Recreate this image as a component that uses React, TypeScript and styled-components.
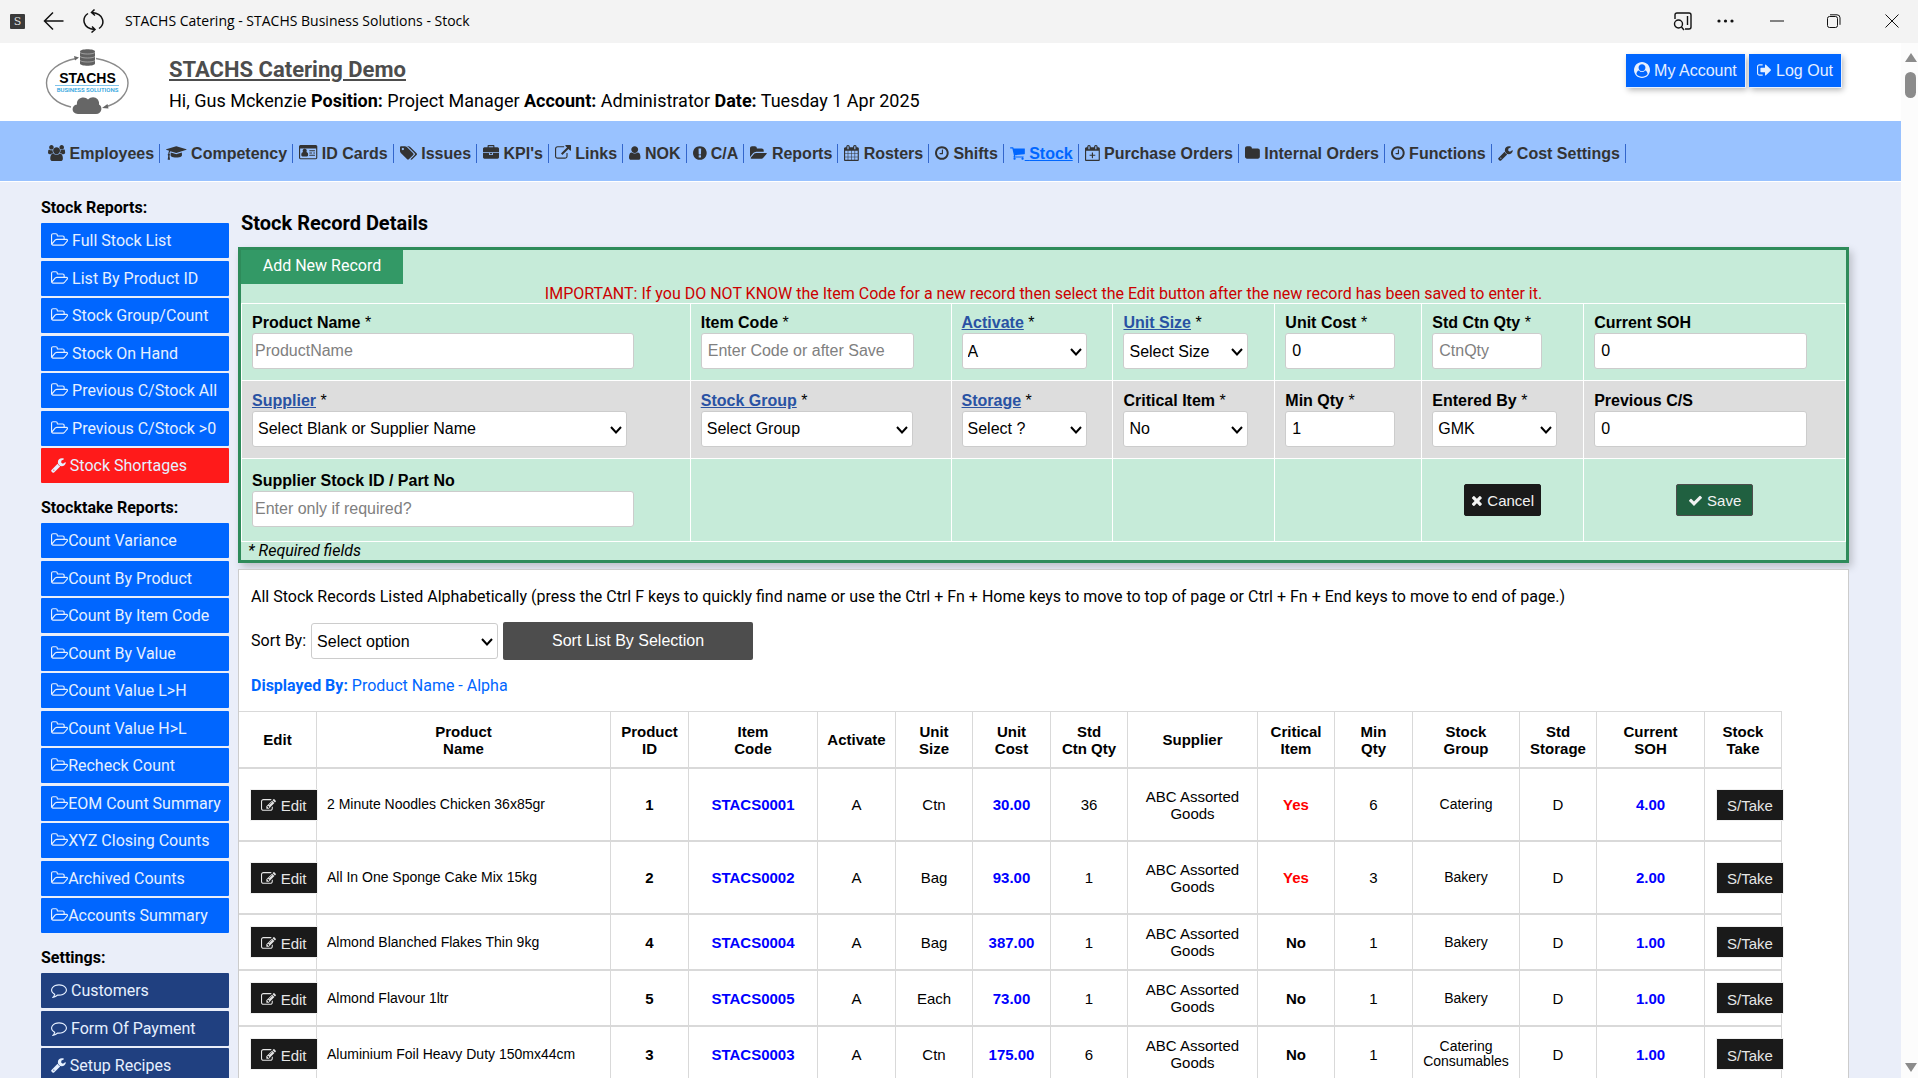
import React from "react";
import styled, { createGlobalStyle, css } from "styled-components";

const arial = `"Liberation Sans", Arial, sans-serif`;
const roboto = `Roboto, "Liberation Sans", sans-serif`;

const GlobalStyle = createGlobalStyle`
  *, *::before, *::after { box-sizing: border-box; }
  body { margin: 0; overflow: hidden; background: #eaeef9; color: #000; font: 16px/20px ${roboto}; }
  button, input, select { font-family: ${arial}; font-size: 16px; margin: 0; }
`;

/* ---------- icons ---------- */

type Glyph = { x: number; w: number; d: string };

const glyphs: Record<string, Glyph> = {
  users: { x: 0, w: 1920, d: "M593 896q-162 5-265 128h-134q-82 0-138-40.500t-56-118.500q0-353 124-353 6 0 43.500 21t97.500 42.500 119 21.500q67 0 133-23-5 37-5 66 0 159 81 290zm1071 637q0 120-73 189.500t-194 69.500h-874q-121 0-194-69.500t-73-189.500q0-53 3.500-103.500t14-109 26.500-108.500 43-97.500 62-81 85.500-53.500 111.500-20q10 0 43 21.500t73 48 107 48 135 21.500 135-21.500 107-48 73-48 43-21.500q61 0 111.500 20t85.500 53.500 62 81 43 97.500 26.500 108.500 14 109 3.500 103.500zm-1024-1277q0 106-75 181t-181 75-181-75-75-181 75-181 181-75 181 75 75 181zm704 384q0 159-112.500 271.500t-271.500 112.500-271.500-112.500-112.500-271.500 112.500-271.500 271.500-112.500 271.500 112.500 112.500 271.500zm576 225q0 78-56 118.500t-138 40.500h-134q-103-123-265-128 81-131 81-290 0-29-5-66 66 23 133 23 59 0 119-21.500t97.500-42.500 43.500-21q124 0 124 353zm-128-609q0 106-75 181t-181 75-181-75-75-181 75-181 181-75 181 75 75 181z" },
  cap: { x: 0, w: 2304, d: "M1774 836l18 316q4 69-82 128t-235 93.500-323 34.500-323-34.500-235-93.500-82-128l18-316 574 181q22 7 48 7t48-7zm530-324q0 23-22 31l-1120 352q-4 1-10 1t-10-1l-652-206q-43 34-71 111.500t-34 178.500q63 36 63 109 0 69-58 107l58 433q2 14-8 25-9 11-24 11h-192q-15 0-24-11-10-11-8-25l58-433q-58-38-58-107 0-73 65-111 11-207 98-330l-333-104q-22-8-22-31t22-31l1120-352q4-1 10-1t10 1l1120 352q22 8 22 31z" },
  idCard: { x: 0, w: 2048, d: "M1024 1131q0 64-37 107t-91 43h-512q-54 0-91-43t-37-107 9-118 30-104 61-82 95-33q80 78 189 78t189-78q56 0 95 33t61 82 30 104 9 118zm-150-491q0 94-69 163t-165 69-165-69-69-163 69-163 165-69 165 69 69 163zm918 480v64q0 32-32 32h-576q-32 0-32-32v-64q0-32 32-32h576q32 0 32 32zm-320-256v64q0 32-32 32h-256q-32 0-32-32v-64q0-32 32-32h256q32 0 32 32zm320 0v64q0 32-32 32h-128q-32 0-32-32v-64q0-32 32-32h128q32 0 32 32zm0-256v64q0 32-32 32h-576q-32 0-32-32v-64q0-32 32-32h576q32 0 32 32zm128 832v-1056h-1792v1056q0 32 32 32h1728q32 0 32-32zm128-1280v1280q0 66-47 113t-113 47h-1728q-66 0-113-47t-47-113v-1280q0-66 47-113t113-47h1728q66 0 113 47t47 113z" },
  tags: { x: 128, w: 1920, d: "M576 448q0-53-37.500-90.500t-90.500-37.500-90.500 37.500-37.500 90.500 37.500 90.500 90.500 37.500 90.500-37.500 37.500-90.500zm1067 576q0 53-37 90l-491 492q-39 37-91 37-53 0-90-37l-715-716q-38-37-64.500-101t-26.500-117v-416q0-52 38-90t90-38h416q53 0 117 26.500t102 64.500l715 714q37 39 37 91zm384 0q0 53-37 90l-491 492q-39 37-91 37-36 0-59-14t-53-45l470-470q37-37 37-90 0-52-37-91l-715-714q-38-38-102-64.500t-117-26.500h224q53 0 117 26.500t102 64.500l715 714q37 39 37 91z" },
  briefcase: { x: 0, w: 1792, d: "M640 256h512v-128h-512v128zm1152 640v480q0 66-47 113t-113 47h-1472q-66 0-113-47t-47-113v-480h672v160q0 26 19 45t45 19h320q26 0 45-19t19-45v-160h672zm-768 0v128h-256v-128h256zm768-480v384h-1792v-384q0-66 47-113t113-47h352v-160q0-40 28-68t68-28h576q40 0 68 28t28 68v160h352q66 0 113 47t47 113z" },
  external: { x: 0, w: 1792, d: "M1408 928v320q0 119-84.500 203.500t-203.500 84.500h-832q-119 0-203.500-84.500t-84.500-203.500v-832q0-119 84.500-203.500t203.500-84.500h704q14 0 23 9t9 23v64q0 14-9 23t-23 9h-704q-66 0-113 47t-47 113v832q0 66 47 113t113 47h832q66 0 113-47t47-113v-320q0-14 9-23t23-9h64q14 0 23 9t9 23zm384-864v512q0 26-19 45t-45 19-45-19l-176-176-652 652q-10 10-23 10t-23-10l-114-114q-10-10-10-23t10-23l652-652-176-176q-19-19-19-45t19-45 45-19h512q26 0 45 19t19 45z" },
  user: { x: 256, w: 1280, d: "M1536 1399q0 109-62.500 187t-150.500 78h-854q-88 0-150.500-78t-62.500-187q0-85 8.500-160.500t31.500-152 58.500-131 94-89 134.500-34.500q131 128 313 128t313-128q76 0 134.500 34.500t94 89 58.500 131 31.500 152 8.500 160.500zm-256-887q0 159-112.500 271.500t-271.500 112.500-271.500-112.500-112.500-271.500 112.500-271.500 271.500-112.500 271.500 112.500 112.500 271.500z" },
  alert: { x: 128, w: 1536, d: "M896 128q209 0 385.500 103t279.500 279.500 103 385.500-103 385.500-279.500 279.500-385.500 103-385.500-103-279.500-279.500-103-385.500 103-385.500 279.500-279.500 385.500-103zm128 1247v-190q0-14-9-23.500t-22-9.500h-192q-13 0-23 10t-10 23v190q0 13 10 23t23 10h192q13 0 22-9.500t9-23.500zm-2-344l18-621q0-12-10-18-10-8-24-8h-220q-14 0-24 8-10 6-10 18l17 621q0 10 10 17.500t24 7.500h185q14 0 23.500-7.500t10.500-17.500z" },
  folderOpen: { x: 0, w: 1920, d: "M1879 952q0 31-31 66l-336 396q-43 51-120.500 86.500t-143.500 35.500h-1088q-34 0-60.500-13t-26.500-43q0-31 31-66l336-396q43-51 120.500-86.500t143.500-35.500h1088q34 0 60.500 13t26.500 43zm-343-344v160h-832q-94 0-197 47.500t-164 119.500l-337 396-5 6q0-4-.5-12.500t-.5-12.500v-960q0-92 66-158t158-66h320q92 0 158 66t66 158v32h544q92 0 158 66t66 158z" },
  folderOutline: { x: 0, w: 1920, d: "M1781 931q0-35-53-35h-1088q-40 0-85.500 21.500t-71.500 52.500l-294 363q-18 24-18 40 0 35 53 35h1088q40 0 86-22t71-53l294-363q18-22 18-39zm-1141-163h768v-160q0-40-28-68t-68-28h-576q-40 0-68-28t-28-68v-64q0-40-28-68t-68-28h-320q-40 0-68 28t-28 68v853l256-315q44-53 116-87.500t140-34.500zm1269 163q0 62-46 120l-295 363q-43 53-116 87.500t-140 34.500h-1088q-92 0-158-66t-66-158v-960q0-92 66-158t158-66h320q92 0 158 66t66 158v32h544q92 0 158 66t66 158v160h192q54 0 99 24.500t67 70.500q15 32 15 68z" },
  calendar: { x: 64, w: 1664, d: "M192 1664h288v-288h-288v288zm352 0h320v-288h-320v288zm-352-352h288v-320h-288v320zm352 0h320v-320h-320v320zm-352-384h288v-288h-288v288zm736 736h320v-288h-320v288zm-384-736h320v-288h-320v288zm768 736h288v-288h-288v288zm-384-352h320v-320h-320v320zm-352-864v-288q0-13-9.500-22.500t-22.500-9.500h-64q-13 0-22.500 9.500t-9.500 22.500v288q0 13 9.500 22.500t22.500 9.500h64q13 0 22.500-9.500t9.500-22.500zm736 864h288v-320h-288v320zm-384-384h320v-288h-320v288zm384 0h288v-288h-288v288zm32-480v-288q0-13-9.500-22.500t-22.500-9.500h-64q-13 0-22.500 9.500t-9.500 22.500v288q0 13 9.500 22.500t22.500 9.500h64q13 0 22.500-9.500t9.500-22.500zm384-64v1280q0 52-38 90t-90 38h-1408q-52 0-90-38t-38-90v-1280q0-52 38-90t90-38h128v-96q0-66 47-113t113-47h64q66 0 113 47t47 113v96h384v-96q0-66 47-113t113-47h64q66 0 113 47t47 113v96h128q52 0 90 38t38 90z" },
  clock: { x: 128, w: 1536, d: "M1024 544v448q0 14-9 23t-23 9h-320q-14 0-23-9t-9-23v-64q0-14 9-23t23-9h224v-352q0-14 9-23t23-9h64q14 0 23 9t9 23zm416 352q0-148-73-273t-198-198-273-73-273 73-198 198-73 273 73 273 198 198 273 73 273-73 198-198 73-273zm224 0q0 209-103 385.500t-279.500 279.500-385.500 103-385.500-103-279.500-279.500-103-385.500 103-385.500 279.500-279.500 385.500-103 385.500 103 279.500 279.500 103 385.500z" },
  cart: { x: 0, w: 1664, d: "M640 1536q0 52-38 90t-90 38-90-38-38-90 38-90 90-38 90 38 38 90zm896 0q0 52-38 90t-90 38-90-38-38-90 38-90 90-38 90 38 38 90zm128-1088v512q0 24-16.500 42.500t-40.500 21.500l-1044 122q13 60 13 70 0 16-24 64h920q26 0 45 19t19 45-19 45-45 19h-1024q-26 0-45-19t-19-45q0-11 8-31.500t16-36 21.500-40 15.500-29.500l-177-823h-204q-26 0-45-19t-19-45 19-45 45-19h256q16 0 28.500 6.500t19.500 15.500 13 24.500 8 26 5.500 29.500 4.500 26h1201q26 0 45 19t19 45z" },
  calendarPlus: { x: 128, w: 1664, d: "M1664 256q52 0 90 38t38 90v1280q0 52-38 90t-90 38h-1408q-52 0-90-38t-38-90v-1280q0-52 38-90t90-38h128v-96q0-66 47-113t113-47h64q66 0 113 47t47 113v96h384v-96q0-66 47-113t113-47h64q66 0 113 47t47 113v96h128zm-384-96v288q0 14 9 23t23 9h64q14 0 23-9t9-23v-288q0-14-9-23t-23-9h-64q-14 0-23 9t-9 23zm-768 0v288q0 14 9 23t23 9h64q14 0 23-9t9-23v-288q0-14-9-23t-23-9h-64q-14 0-23 9t-9 23zm1152 1504v-1024h-1408v1024h1408zm-640-576h224q14 0 23 9t9 23v64q0 14-9 23t-23 9h-224v224q0 14-9 23t-23 9h-64q-14 0-23-9t-9-23v-224h-224q-14 0-23-9t-9-23v-64q0-14 9-23t23-9h224v-224q0-14 9-23t23-9h64q14 0 23 9t9 23v224z" },
  folder: { x: 64, w: 1664, d: "M1728 608v704q0 92-66 158t-158 66h-1216q-92 0-158-66t-66-158v-960q0-92 66-158t158-66h320q92 0 158 66t66 158v32h672q92 0 158 66t66 158z" },
  wrench: { x: 64, w: 1664, d: "M448 1472q0-26-19-45t-45-19-45 19-19 45 19 45 45 19 45-19 19-45zm644-420l-682 682q-37 37-90 37-52 0-91-37l-106-108q-38-36-38-90 0-53 38-91l681-681q39 98 114.500 173.500t173.500 114.500zm634-435q0 39-23 106-47 134-164.500 217.500t-258.500 83.500q-185 0-316.500-131.500t-131.500-316.500 131.500-316.500 316.500-131.500q58 0 121.500 16.500t107.500 46.500q16 11 16 28t-16 28l-293 169v224l193 107q5-3 79-48.500t135.500-81 70.500-35.500q15 0 23.500 10t8.500 25z" },
  comment: { x: 0, w: 1792, d: "M896 384q-204 0-381.500 69.500t-282 187.500-104.500 255q0 112 71.500 213.500t201.500 175.500l87 50-27 96q-24 91-70 172 152-63 275-171l43-38 57 6q69 8 130 8 204 0 381.500-69.500t282-187.500 104.500-255-104.500-255-282-187.500-381.500-69.500zm896 512q0 174-120 321.500t-326 233-450 85.500q-70 0-145-8-198 175-460 242-49 14-114 22h-5q-15 0-27-10.500t-16-27.500v-1q-3-4-.5-12t2-10 4.500-9.500l6-9 7-8.500 8-9q7-8 31-34.500t34.500-38 31-39.500 32.500-51 27-59 26-76q-157-89-247.500-220t-90.500-281q0-174 120-321.500t326-233 450-85.500 450 85.500 326 233 120 321.500z" },
  times: { x: 192, w: 1408, d: "M1490 1322q0 40-28 68l-136 136q-28 28-68 28t-68-28l-294-294-294 294q-28 28-68 28t-68-28l-136-136q-28-28-28-68t28-68l294-294-294-294q-28-28-28-68t28-68l136-136q28-28 68-28t68 28l294 294 294-294q28-28 68-28t68 28l136 136q28 28 28 68t-28 68l-294 294 294 294q28 28 28 68z" },
  check: { x: 0, w: 1792, d: "M1671 566q0 40-28 68l-724 724-136 136q-28 28-68 28t-68-28l-136-136-362-362q-28-28-28-68t28-68l136-136q28-28 68-28t68 28l294 295 656-657q28-28 68-28t68 28l136 136q28 28 28 68z" },
  edit: { x: 0, w: 1792, d: "M888 1184l116-116-152-152-116 116v56h96v96h56zm440-720q-16-16-33 1l-350 350q-17 17-1 33t33-1l350-350q17-17 1-33zm80 594v190q0 119-84.500 203.500t-203.500 84.500h-832q-119 0-203.500-84.500t-84.500-203.500v-832q0-119 84.500-203.500t203.500-84.500h832q63 0 117 25 15 7 18 23 3 17-9 29l-49 49q-14 14-32 8-23-6-45-6h-832q-66 0-113 47t-47 113v832q0 66 47 113t113 47h832q66 0 113-47t47-113v-126q0-13 9-22l64-64q15-15 35-7t20 29zm-96-738l288 288-672 672h-288v-288zm444 132l-92 92-288-288 92-92q28-28 68-28t68 28l152 152q28 28 28 68t-28 68z" },
  signOut: { x: 64, w: 1664, d: "M704 1440q0 4 1 20t.5 26.500-3 23.500-10 19.500-20.500 6.500h-320q-119 0-203.500-84.500t-84.500-203.500v-704q0-119 84.500-203.500t203.500-84.500h320q13 0 22.500 9.500t9.500 22.500q0 4 1 20t.5 26.500-3 23.500-10 19.500-20.500 6.500h-320q-66 0-113 47t-47 113v704q0 66 47 113t113 47h312l11.500 1 11.500 3 8 5.500 7 9 2 13.500zm928-544q0 26-19 45l-544 544q-19 19-45 19t-45-19-19-45v-288h-448q-26 0-45-19t-19-45v-384q0-26 19-45t45-19h448v-288q0-26 19-45t45-19 45 19l544 544q19 19 19 45z" },
  account: { x: 0, w: 1792, d: "M1523 1339q-22-155-87.500-257.500t-184.500-118.500q-67 74-159.500 115.500t-195.500 41.500-195.500-41.500-159.500-115.500q-119 16-184.500 118.500t-87.500 257.500q106 150 271 237.500t356 87.500 356-87.500 271-237.500zm-243-699q0-159-112.500-271.500t-271.500-112.500-271.500 112.500-112.500 271.500 112.500 271.500 271.500 112.500 271.500-112.500 112.500-271.500zm512 256q0 182-71 347.500t-190.500 286-285.500 191.500-349 71q-182 0-348-71t-286-191-191-286-71-348 71-348 191-286 286-191 348-71 348 71 286 191 191 286 71 348z" },
};

const GlyphSvg = styled.svg`
  height: 1em;
  width: auto;
  fill: currentColor;
  vertical-align: -0.143em;
  overflow: visible;
`;

const Icon = ({ name }: { name: string }) => {
  const g = glyphs[name];
  return (
    <GlyphSvg viewBox={`${g.x} 0 ${g.w} 1792`} aria-hidden="true">
      <path d={g.d} />
    </GlyphSvg>
  );
};

/* ---------- window frame ---------- */

const Shell = styled.div`
  height: 100vh;
  display: flex;
  flex-direction: column;
  overflow: hidden;
`;

const TitleBar = styled.div`
  flex: none;
  height: 43px;
  padding: 0 19px 1px 10px;
  display: flex;
  align-items: center;
  background: #f3f3f3;
  font: 14px/20px "Open Sans", "Noto Sans", sans-serif;
`;

const AppBadge = styled.span`
  width: 15px;
  height: 15px;
  margin-right: 18px;
  border-radius: 1px;
  background: #3a3a3a;
  color: #ddd;
  font: 11px/15px "DejaVu Serif", serif;
  text-align: center;
`;

const FrameButton = styled.button<{ $gap: number }>`
  padding: 0;
  margin-right: ${(p) => p.$gap}px;
  border: 0;
  background: none;
  display: flex;
  svg { fill: none; stroke: #111; }
`;

const WindowTitle = styled.span`
  flex: 1;
  padding-bottom: 1px;
`;

const Viewport = styled.div`
  flex: 1;
  min-height: 0;
  display: flex;
`;

const Page = styled.div`
  flex: 1;
  min-width: 0;
  overflow: hidden;
`;

const ScrollTrack = styled.div`
  flex: none;
  width: 17px;
  padding: 10px 0 6px 4px;
  display: flex;
  flex-direction: column;
  justify-content: space-between;
  background: #fcfcfc;
`;

const ScrollTop = styled.div`
  display: flex;
  flex-direction: column;
  gap: 10px;
`;

const ScrollArrow = styled.span<{ $down?: boolean }>`
  width: 12px;
  height: 9px;
  background: #8b8b8b;
  clip-path: ${(p) => (p.$down ? "polygon(0 0, 100% 0, 50% 100%)" : "polygon(0 100%, 100% 100%, 50% 0)")};
`;

const ScrollThumb = styled.span`
  width: 11px;
  height: 26px;
  border-radius: 6px;
  background: #8b8b8b;
`;

/* ---------- page header ---------- */

const Header = styled.header`
  height: 78px;
  padding: 6px 60px 0 45px;
  display: flex;
  align-items: flex-start;
  background: #fff;
`;

const LogoSvg = styled.svg`
  flex: none;
  width: 85px;
  height: 66px;
  margin-right: 39px;
`;

const Identity = styled.div`
  flex: 1;
`;

const SiteTitle = styled.h1`
  margin: 7px 0 6px;
  font-size: 22px;
  font-weight: 700;
  line-height: 28px;
  color: #4d4d4d;
  text-decoration: underline;
`;

const UserLine = styled.p`
  margin: 0;
  font-size: 18px;
  line-height: 22px;
`;

const AccountActions = styled.div`
  display: flex;
  gap: 4px;
  padding-top: 5px;
`;

const AccountLink = styled.a`
  height: 33px;
  padding: 0 8px;
  background: #0066ff;
  box-shadow: 1px 1px 0 #e6f0ff, 2px 3px 6px rgba(0, 0, 0, 0.3);
  color: #e6f0ff;
  font: 16px/33px ${arial};
  text-decoration: none;
`;

const Nav = styled.nav`
  height: 61px;
  padding: 23px 0 0 42px;
  display: flex;
  align-items: flex-start;
  background: #99c2ff;
  border-bottom: 1px solid #fff;
`;

const NavLink = styled.a<{ $active?: boolean }>`
  padding: 0 5px 0 6px;
  border-right: 1px solid #3366cc;
  font: bold 16px/19px ${arial};
  white-space: nowrap;
  color: ${(p) => (p.$active ? "#0066ff" : "#333")};
  text-decoration: ${(p) => (p.$active ? "underline" : "none")};
`;

/* ---------- sidebar ---------- */

const Body = styled.div`
  padding: 0 52px 0 41px;
  display: flex;
  align-items: flex-start;
  gap: 9px;
`;

const Sidebar = styled.aside`
  flex: none;
  width: 188px;
  padding-top: 16px;
`;

const SideTitle = styled.h2`
  margin: 0 0 5px;
  font-size: 16px;
  line-height: 20px;
`;

const SideList = styled.div`
  margin-bottom: 12px;
  display: flex;
  flex-direction: column;
`;

const tones = { blue: "#0066ff", red: "#ff1a1a", navy: "#204080" };

const SideLink = styled.a<{ $tone: keyof typeof tones }>`
  height: 35px;
  margin-bottom: 3px;
  padding-left: 10px;
  border-radius: 1px;
  background: ${(p) => tones[p.$tone]};
  color: #e6f0ff;
  line-height: 35px;
  white-space: nowrap;
  text-decoration: none;
  &:nth-child(even) { margin-bottom: 2px; }
`;

/* ---------- record form ---------- */

const Main = styled.main`
  flex: 1;
  min-width: 0;
  padding-top: 31px;
`;

const SectionTitle = styled.h2`
  margin: 0 0 14px 3px;
  font-size: 20px;
  line-height: 20px;
`;

const RecordForm = styled.form`
  border: 3px solid #2e8b5a;
  background: #c6ebd9;
  box-shadow: 3px 4px 8px rgba(0, 0, 0, 0.2);
`;

const TabButton = styled.button`
  display: block;
  width: 162px;
  height: 34px;
  padding: 0 0 3px;
  border: 0;
  background: #339966;
  color: #fff;
  font-family: ${roboto};
`;

const Notice = styled.p`
  margin: 0;
  text-align: center;
  line-height: 19px;
  color: #cc0000;
`;

const FieldGrid = styled.div`
  display: grid;
  grid-template-columns: 449fr 261fr 162fr 162fr 147fr 162fr 261fr;
  grid-template-rows: 77px 78px 83px;
  border: solid #fff;
  border-width: 1px 1px 0 1px;
`;

const Cell = styled.div<{ $shade?: boolean; $last?: boolean; $center?: boolean }>`
  display: flex;
  flex-direction: column;
  justify-content: center;
  padding: 0 10px ${(p) => (p.$center ? 0 : 2)}px;
  border-bottom: 1px solid #fff;
  border-right: ${(p) => (p.$last ? "0" : "1px solid #fff")};
  background: ${(p) => (p.$shade ? "#dddddd" : "none")};
  ${(p) => p.$center && css`align-items: center;`}
`;

const FieldLabel = styled.label`
  font: bold 16px/20px ${arial};
  white-space: nowrap;
  a { color: #2952a3; }
  span { font-weight: 400; }
`;

const fieldBox = css`
  height: 36px;
  border: 1px solid #ccc;
  border-radius: 3px;
  background: #fff;
  color: #000;
`;

const TextInput = styled.input<{ $w: number; $tight?: boolean }>`
  ${fieldBox}
  width: ${(p) => p.$w}px;
  padding: 0 ${(p) => (p.$tight ? 2 : 6)}px;
  &::placeholder { color: #808080; opacity: 1; }
`;

const SelectWrap = styled.span<{ $w: number }>`
  position: relative;
  display: block;
  width: ${(p) => p.$w}px;
  height: 36px;
`;

const SelectBox = styled.select`
  ${fieldBox}
  display: block;
  width: 100%;
  padding: 0 20px 0 5px;
  appearance: none;
`;

const Chevron = styled.svg`
  position: absolute;
  right: 5px;
  top: 15px;
  width: 12px;
  height: 8px;
  fill: none;
  stroke: #000;
  stroke-width: 2;
  pointer-events: none;
`;

const FormButton = styled.button<{ $save?: boolean }>`
  width: 77px;
  height: 32px;
  padding: 0;
  border: 1px solid ${(p) => (p.$save ? "#4d4d4d" : "#1a1a1a")};
  border-radius: 2px;
  background: ${(p) => (p.$save ? "#206040" : "#1a1a1a")};
  color: #f2f2f2;
  font-size: 15px;
`;

const RequiredNote = styled.p`
  margin: 0 7px;
  line-height: 18px;
  font-style: italic;
`;

/* ---------- record list ---------- */

const ListPanel = styled.section`
  margin-top: 6px;
  border: 1px solid #ccc;
  background: #fff;
`;

const ListIntro = styled.p`
  margin: 17px 12px 15px;
`;

const SortRow = styled.div`
  display: flex;
  align-items: center;
  gap: 5px;
  padding: 0 12px;
`;

const SortButton = styled.button`
  width: 250px;
  height: 38px;
  padding: 0;
  border: 0;
  border-radius: 2px;
  background: #4d4d4d;
  color: #fff;
`;

const DisplayedBy = styled.p`
  margin: 16px 12px 15px;
  color: #0066ff;
`;

const StockTable = styled.table`
  width: calc(100% - 66px);
  table-layout: fixed;
  border-collapse: separate;
  border-spacing: 0;
  font: 15px/17px ${arial};
  text-align: center;
`;

const HeadCell = styled.th`
  height: 57px;
  padding: 0;
  border: solid #d9d9d9;
  border-width: 1px 1px 1px 0;
`;

const Row = styled.tr<{ $tall?: boolean }>`
  height: ${(p) => (p.$tall ? 73 : 56)}px;
`;

const Data = styled.td<{ $name?: boolean; $small?: boolean; $button?: boolean; $bold?: boolean; $color?: string }>`
  padding: 0 2px;
  border: solid #d9d9d9;
  border-width: 1px 1px 1px 0;
  color: ${(p) => p.$color ?? "#000"};
  font-weight: ${(p) => (p.$bold ? 700 : 400)};
  ${(p) => p.$small && css`font-size: 14px; line-height: 15px;`}
  ${(p) => p.$name && css`padding-left: 10px; text-align: left;`}
  ${(p) => p.$button && css`padding: 0 0 0 11px; text-align: left;`}
`;

const RowButton = styled.button`
  display: block;
  width: 68px;
  height: 32px;
  margin-right: -2px;
  padding: 2px 0 0;
  border: 1px solid #f0f0f0;
  background: #1a1a1a;
  color: #e6e6e6;
  font-size: 15px;
`;

/* ---------- data ---------- */

const navItems: [string, string][] = [
  ["users", "Employees"], ["cap", "Competency"], ["idCard", "ID Cards"], ["tags", "Issues"],
  ["briefcase", "KPI's"], ["external", "Links"], ["user", "NOK"], ["alert", "C/A"],
  ["folderOpen", "Reports"], ["calendar", "Rosters"], ["clock", "Shifts"], ["cart", "Stock"],
  ["calendarPlus", "Purchase Orders"], ["folder", "Internal Orders"], ["clock", "Functions"], ["wrench", "Cost Settings"],
];

const stockReports = ["Full Stock List", "List By Product ID", "Stock Group/Count", "Stock On Hand", "Previous C/Stock All", "Previous C/Stock >0"];

const stocktakeReports = [
  "Count Variance", "Count By Product", "Count By Item Code", "Count By Value", "Count Value L>H", "Count Value H>L",
  "Recheck Count", "EOM Count Summary", "XYZ Closing Counts", "Archived Counts", "Accounts Summary",
];

const columns: [string, number][] = [
  ["Edit", 78], ["Product\nName", 294], ["Product\nID", 78], ["Item\nCode", 129], ["Activate", 78], ["Unit\nSize", 77],
  ["Unit\nCost", 78], ["Std\nCtn Qty", 77], ["Supplier", 130], ["Critical\nItem", 77], ["Min\nQty", 78],
  ["Stock\nGroup", 107], ["Std\nStorage", 77], ["Current\nSOH", 108], ["Stock\nTake", 77],
];

const records = [
  { name: "2 Minute Noodles Chicken 36x85gr", id: 1, code: "STACS0001", size: "Ctn", cost: "30.00", ctn: 36, critical: true, min: 6, group: "Catering", soh: "4.00", tall: true },
  { name: "All In One Sponge Cake Mix 15kg", id: 2, code: "STACS0002", size: "Bag", cost: "93.00", ctn: 1, critical: true, min: 3, group: "Bakery", soh: "2.00", tall: true },
  { name: "Almond Blanched Flakes Thin 9kg", id: 4, code: "STACS0004", size: "Bag", cost: "387.00", ctn: 1, critical: false, min: 1, group: "Bakery", soh: "1.00" },
  { name: "Almond Flavour 1ltr", id: 5, code: "STACS0005", size: "Each", cost: "73.00", ctn: 1, critical: false, min: 1, group: "Bakery", soh: "1.00" },
  { name: "Aluminium Foil Heavy Duty 150mx44cm", id: 3, code: "STACS0003", size: "Ctn", cost: "175.00", ctn: 6, critical: false, min: 1, group: "Catering Consumables", soh: "1.00" },
];

/* ---------- parts ---------- */

const Logo = () => (
  <LogoSvg viewBox="0 0 85 66" role="img" aria-label="STACHS Business Solutions">
    <g fill="none" stroke="#8a8a8a" strokeWidth="1.4">
      <path d="M31 9.500C14 13 1.500 22 1.500 34S12 55 26 58" />
      <path d="M51 9.500C70 13 83 22 83 34S72 55 60 58" />
    </g>
    <path d="M34 8.500l-5-1.500 1 4.500zM57 59l5.500-4 1 4.500z" fill="#666" />
    <path d="M35 2.500c0-3 15-3 15 0v12c0 3-15 3-15 0z" fill="#606060" />
    <path d="M35 3.500c2 2 13 2 15 0M35 7.500c2 2 13 2 15 0M35 11.500c2 2 13 2 15 0" fill="none" stroke="#b0b0b0" strokeWidth=".8" />
    <text x="42.500" y="33.500" textAnchor="middle" fontFamily="Liberation Sans, sans-serif" fontWeight="700" fontSize="14">STACHS</text>
    <path d="M10 36.500h64" stroke="#7fc4ea" />
    <text x="42.500" y="43" textAnchor="middle" fontFamily="Roboto, sans-serif" fontWeight="500" fontSize="6" fill="#1ea0dc">BUSINESS SOLUTIONS</text>
    <path d="M33 65c-7 0-7-9-1-9.500-1-7 8-9 11-5 5-5 12-1 11 5 4 2 3 9.500-3 9.500z" fill="#666" />
  </LogoSvg>
);

const Select = ({ id, width, options }: { id: string; width: number; options: string[] }) => (
  <SelectWrap $w={width}>
    <SelectBox id={id}>
      {options.map((o) => <option key={o}>{o}</option>)}
    </SelectBox>
    <Chevron viewBox="0 0 12 8" aria-hidden="true"><path d="M1 1l5 5.500L11 1" /></Chevron>
  </SelectWrap>
);

type FieldProps = {
  id: string;
  label: string;
  link?: boolean;
  star?: boolean;
  width: number;
  options?: string[];
  value?: string;
  placeholder?: string;
  tight?: boolean;
};

const Field = ({ id, label, link, star, width, options, value, placeholder, tight }: FieldProps) => (
  <>
    <FieldLabel htmlFor={id}>
      {link ? <a href="#lookup">{label}</a> : label}
      {star && <span> *</span>}
    </FieldLabel>
    {options ? (
      <Select id={id} width={width} options={options} />
    ) : (
      <TextInput id={id} $w={width} $tight={tight} defaultValue={value} placeholder={placeholder} />
    )}
  </>
);

const topFields: FieldProps[] = [
  { id: "product", label: "Product Name", star: true, width: 382, placeholder: "ProductName", tight: true },
  { id: "code", label: "Item Code", star: true, width: 213, placeholder: "Enter Code or after Save" },
  { id: "activate", label: "Activate", link: true, star: true, width: 125, options: ["A"] },
  { id: "size", label: "Unit Size", link: true, star: true, width: 125, options: ["Select Size"] },
  { id: "cost", label: "Unit Cost", star: true, width: 110, value: "0" },
  { id: "ctn", label: "Std Ctn Qty", star: true, width: 110, placeholder: "CtnQty" },
  { id: "soh", label: "Current SOH", width: 213, value: "0" },
];

const middleFields: FieldProps[] = [
  { id: "supplier", label: "Supplier", link: true, star: true, width: 375, options: ["Select Blank or Supplier Name"] },
  { id: "group", label: "Stock Group", link: true, star: true, width: 212, options: ["Select Group"] },
  { id: "storage", label: "Storage", link: true, star: true, width: 125, options: ["Select ?"] },
  { id: "critical", label: "Critical Item", star: true, width: 125, options: ["No"] },
  { id: "min", label: "Min Qty", star: true, width: 110, value: "1" },
  { id: "entered", label: "Entered By", star: true, width: 125, options: ["GMK"] },
  { id: "previous", label: "Previous C/S", width: 213, value: "0" },
];

export default function App() {
  return (
    <Shell>
      <GlobalStyle />
      <TitleBar>
        <AppBadge>S</AppBadge>
        <FrameButton $gap={19} aria-label="Back">
          <svg width="21" height="20" strokeWidth="1.500"><path d="M20.500 10H1.500M10 1.500L1.500 10l8.500 8.500" /></svg>
        </FrameButton>
        <FrameButton $gap={21} aria-label="Refresh">
          <svg width="21" height="24" strokeWidth="1.500">
            <path d="M5 4.500C-1.500 9-.5 19.500 11.500 20.500M16 19.500C22.500 15 21 4.500 9 3.500M11.500 .5l-3 3 3.500 3M9 17.500l3 3-3.500 3" />
          </svg>
        </FrameButton>
        <WindowTitle>STACHS Catering - STACHS Business Solutions - Stock</WindowTitle>
        <FrameButton $gap={25} aria-label="Search page">
          <svg width="19" height="19" strokeWidth="1.400">
            <path d="M2 7V3q0-2 2-2h12q2 0 2 2v12q0 2-2 2h-4M14.500 4v9M8.500 15l2.500 3" /><circle cx="5.500" cy="12" r="4" />
          </svg>
        </FrameButton>
        <FrameButton $gap={36} aria-label="More">
          <svg width="17" height="4"><g fill="#111" stroke="none"><circle cx="2" cy="2" r="1.600" /><circle cx="8.500" cy="2" r="1.600" /><circle cx="15" cy="2" r="1.600" /></g></svg>
        </FrameButton>
        <FrameButton $gap={43} aria-label="Minimise"><svg width="14" height="2"><path d="M0 1h14" /></svg></FrameButton>
        <FrameButton $gap={44} aria-label="Restore">
          <svg width="14" height="14"><rect x=".5" y="2.500" width="10" height="11" rx="2" /><path d="M3 .8h7q3 0 3 3v7" /></svg>
        </FrameButton>
        <FrameButton $gap={0} aria-label="Close"><svg width="14" height="14"><path d="M.5.5l13 13M13.500.5l-13 13" /></svg></FrameButton>
      </TitleBar>

      <Viewport>
        <Page>
          <Header>
            <Logo />
            <Identity>
              <SiteTitle>STACHS Catering Demo</SiteTitle>
              <UserLine>
                Hi, Gus Mckenzie <b>Position:</b> Project Manager <b>Account:</b> Administrator <b>Date:</b> Tuesday 1 Apr 2025
              </UserLine>
            </Identity>
            <AccountActions>
              <AccountLink href="#account"><Icon name="account" /> My Account</AccountLink>
              <AccountLink href="#logout"><Icon name="signOut" /> Log Out</AccountLink>
            </AccountActions>
          </Header>

          <Nav>
            {navItems.map(([icon, label]) => (
              <NavLink key={label} href="#nav" $active={label === "Stock"}>
                <Icon name={icon} /> {label}
              </NavLink>
            ))}
          </Nav>

          <Body>
            <Sidebar>
              <SideTitle>Stock Reports:</SideTitle>
              <SideList>
                {stockReports.map((t) => (
                  <SideLink key={t} href="#report" $tone="blue"><Icon name="folderOutline" /> {t}</SideLink>
                ))}
                <SideLink href="#shortages" $tone="red"><Icon name="wrench" /> Stock Shortages</SideLink>
              </SideList>
              <SideTitle>Stocktake Reports:</SideTitle>
              <SideList>
                {stocktakeReports.map((t) => (
                  <SideLink key={t} href="#count" $tone="blue"><Icon name="folderOutline" />{t}</SideLink>
                ))}
              </SideList>
              <SideTitle>Settings:</SideTitle>
              <SideList>
                <SideLink href="#customers" $tone="navy"><Icon name="comment" /> Customers</SideLink>
                <SideLink href="#payment" $tone="navy"><Icon name="comment" /> Form Of Payment</SideLink>
                <SideLink href="#recipes" $tone="navy"><Icon name="wrench" /> Setup Recipes</SideLink>
              </SideList>
            </Sidebar>

            <Main>
              <SectionTitle>Stock Record Details</SectionTitle>
              <RecordForm onSubmit={(e) => e.preventDefault()}>
                <TabButton type="button">Add New Record</TabButton>
                <Notice>IMPORTANT: If you DO NOT KNOW the Item Code for a new record then select the Edit button after the new record has been saved to enter it.</Notice>
                <FieldGrid>
                  {topFields.map((f, i) => <Cell key={f.id} $last={i === 6}><Field {...f} /></Cell>)}
                  {middleFields.map((f, i) => <Cell key={f.id} $shade $last={i === 6}><Field {...f} /></Cell>)}
                  <Cell><Field id="part" label="Supplier Stock ID / Part No" width={382} placeholder="Enter only if required?" tight /></Cell>
                  <Cell /><Cell /><Cell /><Cell />
                  <Cell $center><FormButton type="button"><Icon name="times" /> Cancel</FormButton></Cell>
                  <Cell $center $last><FormButton $save><Icon name="check" /> Save</FormButton></Cell>
                </FieldGrid>
                <RequiredNote>* Required fields</RequiredNote>
              </RecordForm>

              <ListPanel>
                <ListIntro>All Stock Records Listed Alphabetically (press the Ctrl F keys to quickly find name or use the Ctrl + Fn + Home keys to move to top of page or Ctrl + Fn + End keys to move to end of page.)</ListIntro>
                <SortRow>
                  <label htmlFor="sort">Sort By:</label>
                  <Select id="sort" width={187} options={["Select option"]} />
                  <SortButton type="button">Sort List By Selection</SortButton>
                </SortRow>
                <DisplayedBy><b>Displayed By:</b> Product Name - Alpha</DisplayedBy>
                <StockTable>
                  <colgroup>{columns.map(([t, w]) => <col key={t} style={{ width: w }} />)}</colgroup>
                  <thead>
                    <tr>
                      {columns.map(([t]) => (
                        <HeadCell key={t} scope="col">
                          {t.split("\n").map((line, i) => <React.Fragment key={line}>{i > 0 && <br />}{line}</React.Fragment>)}
                        </HeadCell>
                      ))}
                    </tr>
                  </thead>
                  <tbody>
                    {records.map((r) => (
                      <Row key={r.id} $tall={r.tall}>
                        <Data $button><RowButton><Icon name="edit" /> Edit</RowButton></Data>
                        <Data $name $small>{r.name}</Data>
                        <Data $bold>{r.id}</Data>
                        <Data $bold $color="#0000ff">{r.code}</Data>
                        <Data>A</Data>
                        <Data>{r.size}</Data>
                        <Data $bold $color="#0000ff">{r.cost}</Data>
                        <Data>{r.ctn}</Data>
                        <Data>ABC Assorted Goods</Data>
                        <Data $bold $color={r.critical ? "#ff0000" : "#000"}>{r.critical ? "Yes" : "No"}</Data>
                        <Data>{r.min}</Data>
                        <Data $small>{r.group}</Data>
                        <Data>D</Data>
                        <Data $bold $color="#0000ff">{r.soh}</Data>
                        <Data $button><RowButton>S/Take</RowButton></Data>
                      </Row>
                    ))}
                  </tbody>
                </StockTable>
              </ListPanel>
            </Main>
          </Body>
        </Page>

        <ScrollTrack>
          <ScrollTop><ScrollArrow /><ScrollThumb /></ScrollTop>
          <ScrollArrow $down />
        </ScrollTrack>
      </Viewport>
    </Shell>
  );
}
